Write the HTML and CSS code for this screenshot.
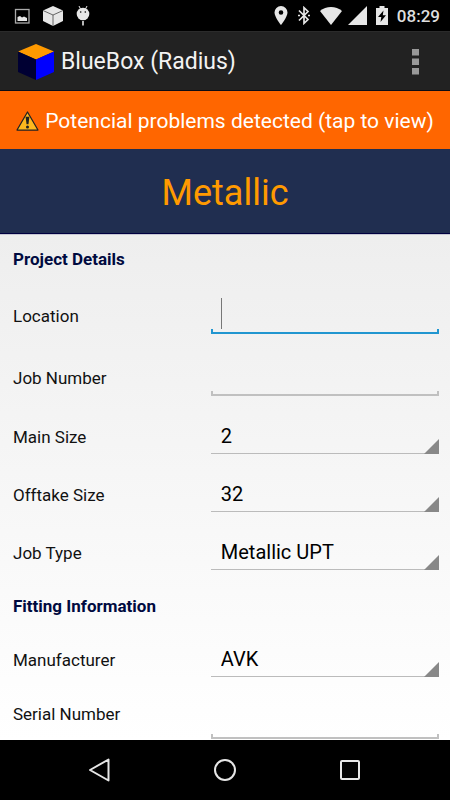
FILE: index.html
```html
<!DOCTYPE html>
<html lang="en">
<head>
<meta charset="utf-8">
<meta name="viewport" content="width=device-width, initial-scale=1">
<title>BlueBox (Radius)</title>
<link rel="stylesheet" href="styles.css">
</head>
<body>
<div class="screen">
  <div class="status">
    <div class="status-group status-left">
      <svg width="16" height="16" viewBox="0 0 16 16"><rect x="1.500" y="1.500" width="13.500" height="13.500" fill="none" stroke="#aaa" stroke-width="1.300"/><path d="M3.500 13V9L6 8L8 9.500L10 8.500L13 10V13Z" fill="#e6e6e6"/></svg>
      <svg width="22" height="20" viewBox="0 0 22 20"><path d="M11 0L21 4.500V15L11 20L1 15V4.500Z" fill="#e6e6e6"/><path d="M1 4.500L11 9L21 4.500M11 9V20" fill="none" stroke="#444" stroke-width=".8"/></svg>
      <svg width="14" height="20" viewBox="0 0 14 20"><path d="M3 0L5 4M11 0L9 4" stroke="#e6e6e6" stroke-width="1"/><circle cx="7" cy="8" r="6.300" fill="#e6e6e6"/><circle cx="4.700" cy="6" r=".8"/><circle cx="9.300" cy="6" r=".8"/><path d="M7 15V19.500" stroke="#e6e6e6" stroke-width="1.600"/></svg>
    </div>
    <div class="status-group status-right">
      <svg width="14" height="19" viewBox="0 0 14 19"><path fill="#e6e6e6" fill-rule="evenodd" d="M7 0A6.500 6.500 0 0 0 .5 6.500C.5 11 7 19 7 19S13.500 11 13.500 6.500A6.500 6.500 0 0 0 7 0ZM7 4.200A2.300 2.300 0 1 1 7 8.800A2.300 2.300 0 1 1 7 4.200Z"/></svg>
      <svg width="14" height="19" viewBox="0 0 14 19"><path d="M2 4.500L11 13.500L7 17.300V1.700L11 5.500L2 14.500" fill="none" stroke="#e6e6e6" stroke-width="1.700"/><path d="M1 9.500H3M11 9.500H13" stroke="#e6e6e6" stroke-width="1.700"/></svg>
      <svg width="22" height="18" viewBox="0 0 22 18"><path fill="#e6e6e6" d="M0 4C6-1.300 16-1.300 22 4L11 18Z"/></svg>
      <svg class="signal" width="19" height="19" viewBox="0 0 19 19"><path fill="#e6e6e6" d="M19 0V19H0Z"/></svg>
      <svg width="12" height="19" viewBox="0 0 12 19"><path fill="#e6e6e6" d="M3.500 0H8.500V2H12V19H0V2H3.500Z"/><path d="M7.500 4.500L2 11H5.300L4.500 16L10 9.300H6.800Z" fill="#000"/></svg>
      <time class="clock">08:29</time>
    </div>
  </div>

  <header class="appbar">
    <svg width="36" height="36" viewBox="0 0 36 36"><path d="M18 0L36 7.500L18 15.500L0 7.500Z" fill="#ff9a00"/><path d="M0 7.500L18 15.500V36L0 28Z" fill="#000033"/><path d="M36 7.500L18 15.500V36L36 28Z" fill="#0000ff"/></svg>
    <span class="appbar-title">BlueBox (Radius)</span>
    <button class="overflow" type="button" aria-label="More options"><svg width="7" height="26" viewBox="0 0 7 26"><path d="M0 0H7V6.500H0ZM0 9.500H7V16H0ZM0 19H7V25.500H0Z" fill="#999"/></svg></button>
  </header>

  <button class="warning" type="button">
    <svg width="23" height="20" viewBox="0 0 24 21"><path d="M12 1L23 20H1Z" fill="#fdb81e" stroke="#222" stroke-width="1.300" stroke-linejoin="round"/><path d="M10 6H14L13 14H11Z" fill="#222"/><circle cx="12" cy="16.900" r="1.600" fill="#222"/></svg>
    <span>Potencial problems detected (tap to view)</span>
  </button>

  <h1 class="title">Metallic</h1>

  <form class="form">
    <h2 class="section">Project Details</h2>
    <div class="row row-text">
      <label for="location">Location</label>
      <div class="control"><input class="field field-active" id="location" type="text"><span class="caret"></span></div>
    </div>
    <div class="row row-text">
      <label for="job-number">Job Number</label>
      <div class="control"><input class="field" id="job-number" type="text"></div>
    </div>
    <div class="row">
      <label for="main-size">Main Size</label>
      <div class="control control-select"><select class="spinner" id="main-size"><option>2</option></select></div>
    </div>
    <div class="row">
      <label for="offtake-size">Offtake Size</label>
      <div class="control control-select"><select class="spinner" id="offtake-size"><option>32</option></select></div>
    </div>
    <div class="row">
      <label for="job-type">Job Type</label>
      <div class="control control-select"><select class="spinner" id="job-type"><option>Metallic UPT</option></select></div>
    </div>
    <h2 class="section">Fitting Information</h2>
    <div class="row">
      <label for="manufacturer">Manufacturer</label>
      <div class="control control-select"><select class="spinner" id="manufacturer"><option>AVK</option></select></div>
    </div>
    <div class="row row-last">
      <label for="serial">Serial Number</label>
      <div class="control"><input class="field" id="serial" type="text"></div>
    </div>
  </form>

  <nav class="navbar">
    <button type="button" aria-label="Back"><svg width="24" height="24" viewBox="0 0 24 24"><path d="M20.500 1.500V22.500L2 12Z" fill="none" stroke="#e6e6e6" stroke-width="2" stroke-linejoin="round"/></svg></button>
    <button type="button" aria-label="Home"><svg width="24" height="24" viewBox="0 0 24 24"><circle cx="12" cy="12" r="10" fill="none" stroke="#e6e6e6" stroke-width="2"/></svg></button>
    <button type="button" aria-label="Recent apps"><svg width="24" height="24" viewBox="0 0 24 24"><rect x="3" y="3" width="18" height="18" rx="1" fill="none" stroke="#e6e6e6" stroke-width="2"/></svg></button>
  </nav>
</div>
</body>
</html>
```
FILE: styles.css
```css
* { box-sizing: border-box; }

body {
  margin: 0;
  background: #000;
  font-family: Roboto, sans-serif;
  font-size: 17px;
  color: #111;
}

svg { display: block; flex: none; }

button {
  border: 0;
  padding: 0;
  background: none;
  font: inherit;
  color: inherit;
}

.screen {
  display: flex;
  flex-direction: column;
  height: 100vh;
}

.status {
  display: flex;
  flex: none;
  align-items: center;
  justify-content: space-between;
  height: 31px;
  padding: 0 10px 0 14px;
  background: #000;
}

.status-group { display: flex; align-items: center; }
.status-left { gap: 12px; }
.status-right { gap: 9px; }
.signal { margin-left: -3px; }

.clock {
  font-size: 17px;
  line-height: 20px;
  font-weight: 500;
  color: #dedede;
}

.appbar {
  display: flex;
  flex: none;
  align-items: center;
  height: 60px;
  padding: 2px 31px 0 18px;
  gap: 7px;
  background: #222;
  border-top: 1px solid #2b2b2b;
  border-bottom: 1px solid #0c0c14;
}

.appbar-title {
  flex: 1;
  font-size: 23px;
  line-height: 28px;
  color: #f3f3f3;
}

.warning {
  display: flex;
  flex: none;
  align-items: center;
  justify-content: center;
  gap: 6px;
  height: 58px;
  padding-top: 2px;
  background: #ff6600;
  color: #fff;
  font-size: 21px;
  line-height: 26px;
}

.title {
  flex: none;
  margin: 0;
  padding: 22px 0 18px;
  background: #202e50;
  border-bottom: 1px solid #000040;
  color: #ff9a00;
  font-size: 36px;
  line-height: 44px;
  font-weight: 400;
  text-align: center;
}

.form {
  flex: 1;
  min-height: 0;
  overflow: hidden;
  background: linear-gradient(#eee, #fff);
  border-top: 1px solid #c8c8d4;
}

.section {
  margin: 0;
  padding: 0 13px;
  font-size: 17px;
  line-height: 49px;
  font-weight: 700;
  color: #000a40;
}

.row {
  display: grid;
  grid-template-columns: 13fr 15fr;
  align-items: center;
  height: 58px;
  padding: 0 11px 0 13px;
}

.row-text { height: 62px; }
.row-text label { padding-top: 2px; }
.row-last { height: 50px; }
.row-last .control { padding-bottom: 0; }

.control {
  position: relative;
  display: flex;
  align-self: end;
  padding-bottom: 12px;
}

.control-select::after {
  content: "";
  position: absolute;
  right: 0;
  bottom: 12px;
  width: 15px;
  height: 15px;
  background: #888;
  clip-path: polygon(100% 0, 100% 100%, 0 100%);
  pointer-events: none;
}

.field,
.spinner {
  width: 100%;
  height: 40px;
  margin: 0;
  padding: 4px 10px 0;
  border: 0;
  border-radius: 0;
  outline: 0;
  appearance: none;
  background: none;
  font: inherit;
  font-size: 20px;
  color: #000;
}

.field {
  --line: #c0c0c0;
  background:
    linear-gradient(var(--line), var(--line)) left bottom / 100% 2px no-repeat,
    linear-gradient(var(--line), var(--line)) left bottom / 2px 5px no-repeat,
    linear-gradient(var(--line), var(--line)) right bottom / 2px 5px no-repeat;
}

.field-active { --line: #2196d0; }

.caret {
  position: absolute;
  left: 10px;
  bottom: 17px;
  width: 1px;
  height: 31px;
  background: #777;
}

.spinner { border-bottom: 1px solid #bbb; }

.navbar {
  display: flex;
  flex: none;
  align-items: center;
  justify-content: center;
  gap: 101px;
  height: 60px;
  background: #000;
}
```
